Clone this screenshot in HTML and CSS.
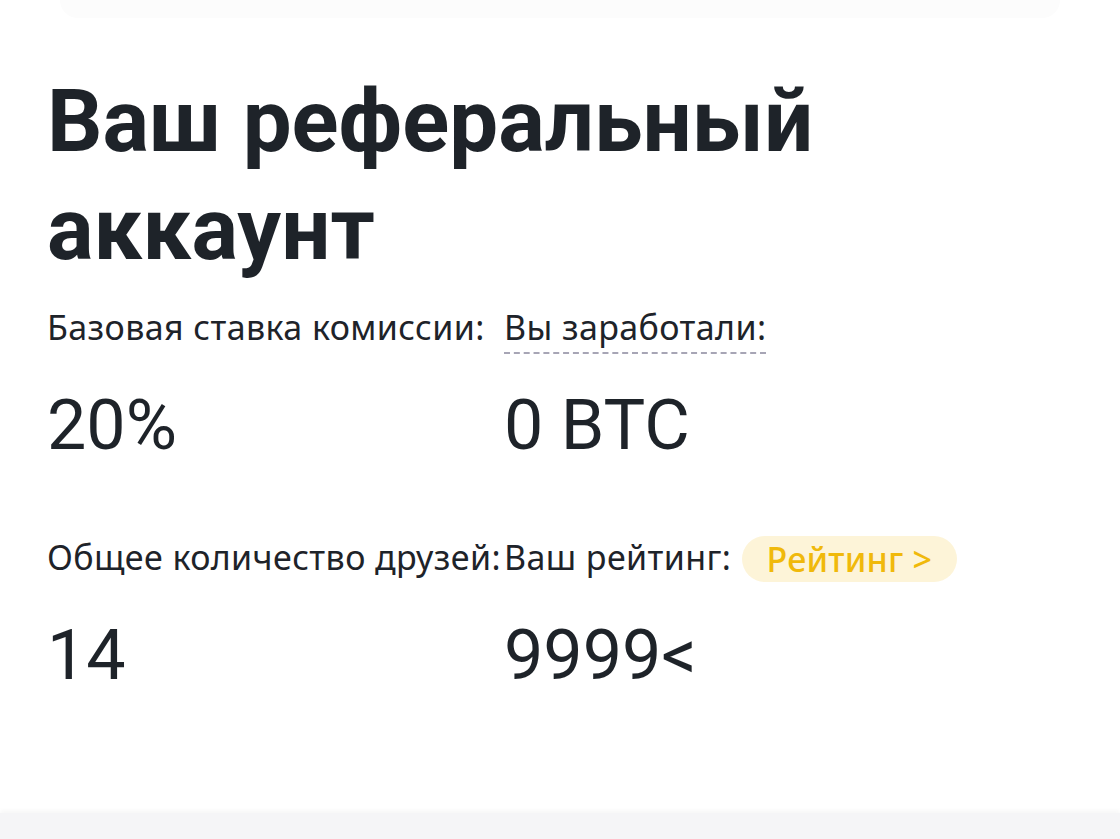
FILE: index.html
```html
<!DOCTYPE html>
<html lang="ru">
<head>
    <meta charset="UTF-8">
    <title>Реферальный аккаунт</title>
    <link rel="stylesheet" href="styles.css">
</head>
<body>
    <div class="top-shade"></div>
    <div id="wrap">
        <h1>Ваш реферальный аккаунт</h1>
        <div class="stats">
            <div class="cell">
                <p class="label">Базовая ставка комиссии:</p>
                <p class="value">20%</p>
            </div>
            <div class="cell">
                <p class="label"><span class="dashed">Вы заработали:</span></p>
                <p class="value">0 BTC</p>
            </div>
            <div class="cell">
                <p class="label">Общее количество друзей:</p>
                <p class="value">14</p>
            </div>
            <div class="cell">
                <p class="label">Ваш рейтинг: <a href="#" class="pill">Рейтинг &gt;</a></p>
                <p class="value">9999&lt;</p>
            </div>
        </div>
    </div>
    <div class="bottom-band"></div>
</body>
</html>
```

FILE: styles.css
```css
*{margin: 0;padding: 0;box-sizing: border-box;}
a{text-decoration: none;}
html,body{height: 100%;}
body{background: #fff; font-family: "Noto Sans", "Open Sans", sans-serif; color: #1e2329; display: flex; flex-direction: column;}
.top-shade{height: 18px; margin: 0 60px; background: #fcfcfc; border-radius: 0 0 24px 24px; flex: none;}
#wrap{flex: 1; padding: 49px 0 0 47px;}
#wrap h1{font-family: Roboto, "Noto Sans", sans-serif; font-size: 87px; line-height: 108px; font-weight: 700; width: 820px; color: #1e2329;}
.stats{display: grid; grid-template-columns: 457px auto; row-gap: 69px; margin-top: 21px;}
.label{font-size: 34px; line-height: 46px; height: 46px; letter-spacing: 0.4px; color: #1e2329; white-space: nowrap;}
.dashed{border-bottom: 2px dashed #a7a5b5; padding-bottom: 2px;}
.pill{display: inline-block; vertical-align: top; margin-left: 1px; margin-top: 2px; height: 46px; line-height: 46px; padding: 0 25px; border-radius: 23px; background: #fdf4d8; color: #f0b90b; font-size: 34px; font-weight: 500; letter-spacing: 0.2px;}
.value{font-family: Roboto, "Liberation Sans", sans-serif; font-weight: 400; font-size: 70px; line-height: 80px; margin-top: 35px; color: #1e2329;}
.bottom-band{height: 26px; background: #f5f5f7; box-shadow: 0 -3px 4px #f8f8f8; flex: none;}
```
